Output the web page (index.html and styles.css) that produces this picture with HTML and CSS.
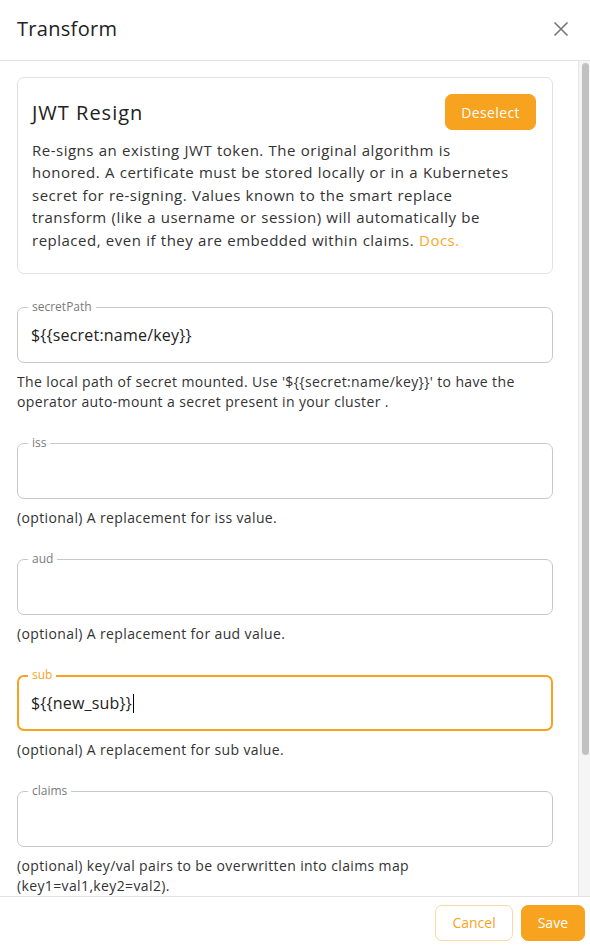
FILE: index.html
```html
<!DOCTYPE html>
<html>
<head>
<meta charset="utf-8">
<link rel="stylesheet" href="styles.css">
</head>
<body>
<div class="dialog">
  <header class="head">
    <h1 class="title">Transform</h1>
    <button class="close" aria-label="close">
      <svg width="16" height="16" viewBox="0 0 16 16"><path d="M1.5 1.5L14.5 14.5M14.5 1.5L1.5 14.5" stroke="#767676" stroke-width="1.6" fill="none"/></svg>
    </button>
  </header>
  <div class="body">
    <main class="content">
      <section class="card">
        <div class="card-top">
          <h2 class="card-title">JWT Resign</h2>
          <button class="btn btn-fill btn-deselect">Deselect</button>
        </div>
        <p class="card-text">Re-signs an existing JWT token. The original algorithm is<br>honored. A certificate must be stored locally or in a Kubernetes<br>secret for re-signing. Values known to the smart replace<br>transform (like a username or session) will automatically be<br>replaced, even if they are embedded within claims. <a class="link">Docs.</a></p>
      </section>

      <div class="form-row">
        <div class="field"><span class="label">secretPath</span><span class="value">${{secret:name/key}}</span></div>
        <p class="help">The local path of secret mounted. Use '${{secret:name/key}}' to have the<br>operator auto-mount a secret present in your cluster .</p>
      </div>
      <div class="form-row">
        <div class="field"><span class="label">iss</span><span class="value"></span></div>
        <p class="help">(optional) A replacement for iss value.</p>
      </div>
      <div class="form-row">
        <div class="field"><span class="label">aud</span><span class="value"></span></div>
        <p class="help">(optional) A replacement for aud value.</p>
      </div>
      <div class="form-row">
        <div class="field focused"><span class="label">sub</span><span class="value">${{new_sub}}<span class="caret"></span></span></div>
        <p class="help">(optional) A replacement for sub value.</p>
      </div>
      <div class="form-row">
        <div class="field"><span class="label">claims</span><span class="value"></span></div>
        <p class="help">(optional) key/val pairs to be overwritten into claims map<br>(key1=val1,key2=val2).</p>
      </div>
    </main>
    <div class="scrollbar"><div class="thumb"></div></div>
  </div>
  <footer class="foot">
    <button class="btn btn-outline">Cancel</button>
    <button class="btn btn-fill">Save</button>
  </footer>
</div>
</body>
</html>
```

FILE: styles.css
```css
* { box-sizing: border-box; }
html, body { margin: 0; padding: 0; background: #fff; }
body { font-family: "Open Sans", "Liberation Sans", sans-serif; color: #333; }
.dialog { display: flex; flex-direction: column; height: 948px; width: 590px; overflow: hidden; }
.head { height: 61px; flex: none; display: flex; align-items: center; justify-content: space-between; padding: 0 21px 3px 17px; border-bottom: 1px solid #e3e3e3; }
.title { margin: 0; font-size: 20px; font-weight: 500; color: #222; letter-spacing: 0.3px; }
.close { border: 0; background: none; padding: 0; width: 16px; height: 16px; display: flex; }
.body { flex: 1; display: flex; min-height: 0; }
.content { flex: 1; overflow: hidden; padding: 16px 25px 0 17px; }
.scrollbar { width: 12px; flex: none; background: #f5f5f5; border-left: 1px solid #e6e6e6; padding: 2px 1px 0 3px; }
.thumb { height: 692px; background: #c1c1c1; border-radius: 4px; }
.card { border: 1px solid #e2e2e2; border-radius: 7px; padding: 16px 16px 22px 14px; margin-bottom: 33px; }
.card-top { display: flex; justify-content: space-between; align-items: center; }
.card-title { margin: 0; font-size: 20px; font-weight: 500; color: #222; letter-spacing: 1px; }
.card-text { margin: 9px 0 0; font-size: 15px; line-height: 22.4px; color: #333; letter-spacing: 0.5px; word-spacing: 0.4px; }
.link { color: #f8a82c; }
.btn { font-family: inherit; font-size: 14px; font-weight: 500; height: 36px; border-radius: 7px; padding: 0 16px; cursor: pointer; }
.btn-deselect { letter-spacing: 0.4px; padding: 0 15px; }
.btn-fill { background: #f7a31f; color: #fff; border: 1px solid #f7a31f; }
.btn-outline { background: #fff; color: #f7a31f; border: 1px solid #fcd9a2; }
.form-row { margin-bottom: 31px; }
.field { position: relative; height: 56px; border: 1px solid #c8c8c8; border-radius: 7px; display: flex; align-items: center; padding: 0 13px; }
.field.focused { border: 2px solid #f7a31f; padding: 0 12px; }
.label { position: absolute; top: -8px; left: 10px; padding: 0 4px; background: #fff; font-size: 12px; line-height: 14px; color: #7a7a7a; }
.field.focused .label { left: 9px; top: -9px; color: #f7a31f; }
.value { font-size: 16px; color: #222; display: flex; align-items: center; letter-spacing: 0.2px; }
.caret { display: inline-block; width: 1px; height: 19px; background: #000; margin-left: 1px; }
.help { margin: 9px 0 0; font-size: 14px; line-height: 20px; color: #333; letter-spacing: 0.37px; }
.foot { height: 52px; flex: none; border-top: 1px solid #e3e3e3; display: flex; justify-content: flex-end; align-items: center; gap: 8px; padding: 0 5px 0 0; }
```
